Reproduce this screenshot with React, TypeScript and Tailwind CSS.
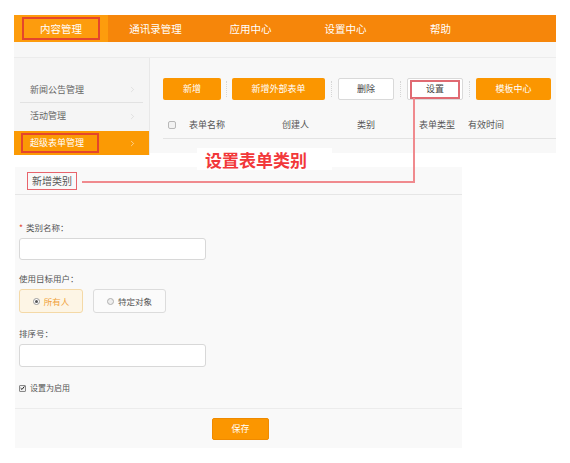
import { ChevronRight } from "lucide-react";

const navItems = ["内容管理", "通讯录管理", "应用中心", "设置中心", "帮助"];
const sideItems = ["新闻公告管理", "活动管理"];
const columns = [
  { label: "表单名称", w: "w-[93px]" },
  { label: "创建人", w: "w-[75px]" },
  { label: "类别", w: "w-[62px]" },
  { label: "表单类型", w: "w-[49px]" },
  { label: "有效时间", w: "w-[60px]" },
];

function Divider({ wide }: { wide?: boolean }) {
  return (
    <div
      className={`h-[16px] border-l border-dotted border-[#d6d6d6] ${wide ? "mx-[6px]" : "mx-[5px]"}`}
    />
  );
}

export default function App() {
  return (
    <div
      className="relative w-[570px] h-[463px] bg-white overflow-hidden"
      style={{ fontFamily: '"Noto Sans CJK SC", "Noto Sans", sans-serif' }}
    >
      {/* Top nav */}
      <div className="ml-[14px] mt-[15px] w-[542px] h-[27px] flex bg-[#f6860a] text-white text-[10.5px]">
        {navItems.map((item, i) =>
          i === 0 ? (
            <div key={item} className="w-[94px] h-full bg-[#fd9c0d] flex items-center justify-center">
              <div className="w-[78px] h-[23px] border-2 border-[#e4462c] flex items-center justify-center">
                {item}
              </div>
            </div>
          ) : (
            <div key={item} className="w-[95px] h-full flex items-center justify-center">
              {item}
            </div>
          )
        )}
      </div>

      {/* Grey band */}
      <div className="ml-[14px] w-[542px] h-[16px] bg-[#f7f7f7] border-b border-[#ececec]" />

      {/* Body */}
      <div className="ml-[14px] w-[542px] flex">
        {/* Sidebar */}
        <div className="w-[136px] h-[97px] bg-[#f5f5f5] border-r border-[#e8e8e8] pt-[19px] text-[9px] text-[#666]">
          {sideItems.map((item, i) => (
            <div
              key={item}
              className={`mx-[6px] h-[26px] flex items-center justify-between pl-[10px] pr-[6px] ${
                i === 0 ? "border-b border-[#e2e2e2]" : ""
              }`}
            >
              <span>{item}</span>
              <ChevronRight size={9} strokeWidth={1.2} className="text-[#c8c8c8]" />
            </div>
          ))}
          <div className="h-[24px] mt-[2px] bg-[#fb9a04] flex items-center justify-between pl-[7px] pr-[12px] text-white">
            <div className="w-[78px] h-[20px] border-2 border-[#e4462c] flex items-center pl-[7px]">
              超级表单管理
            </div>
            <ChevronRight size={9} strokeWidth={1.4} className="text-white" />
          </div>
        </div>

        {/* Main */}
        <div className="w-[406px] h-[95px] bg-[#f8f8f8] pl-[13px] pt-[20px]">
          <div className="flex items-center text-[9px]">
            <button className="w-[58px] h-[22px] rounded-[2px] bg-[#fb9600] text-white">新增</button>
            <Divider />
            <button className="w-[93px] h-[22px] rounded-[2px] bg-[#fb9600] text-white">新增外部表单</button>
            <Divider wide />
            <button className="w-[56px] h-[22px] rounded-[2px] bg-white border border-[#d9d9d9] text-[#444]">
              删除
            </button>
            <Divider wide />
            <div className="w-[56px] h-[22px] rounded-[2px] bg-white border border-[#d9d9d9] flex items-center justify-center">
              <div className="w-[50px] h-[19px] border-2 border-[#e06a72] flex items-center justify-center text-[#444]">
                设置
              </div>
            </div>
            <Divider wide />
            <button className="w-[75px] h-[22px] rounded-[2px] bg-[#fb9600] text-white">模板中心</button>
          </div>
          <div className="mt-[12px] h-[27px] border-b border-[#e3e3e3] flex items-center text-[9px] text-[#555]">
            <div className="w-[8px] h-[8px] ml-[5px] mr-[13px] rounded-[2px] border border-[#b8b8b8] bg-[#f2f2f2]" />
            {columns.map((c) => (
              <div key={c.label} className={c.w}>
                {c.label}
              </div>
            ))}
          </div>
        </div>
      </div>

      {/* Form panel */}
      <div className="ml-[15px] mt-[12px] w-[447px] h-[281px] bg-[#f9f9f9]">
        <div className="h-[28px] border-b border-[#e6e6e6] flex items-center pl-[12px]">
          <div className="h-[18px] px-[4px] border border-[#e8646c] flex items-center text-[10px] text-[#555]">
            新增类别
          </div>
        </div>

        <div className="pl-[4px] pt-[26px] text-[8.5px] text-[#555]">
          <div className="flex items-center h-[12px]">
            <span className="text-[#e4462c] mr-[3px]">*</span>
            <span>类别名称：</span>
          </div>
          <div className="mt-[5px] w-[187px] h-[22px] rounded-[3px] bg-white border border-[#d8d8d8]" />

          <div className="mt-[12px] h-[12px] flex items-center">使用目标用户：</div>
          <div className="mt-[5px] flex gap-[10px]">
            <div className="w-[64px] h-[24px] rounded-[3px] bg-[#fdf5e5] border border-[#f4d9a7] flex items-center justify-center gap-[4px] text-[#f0a138]">
              <span className="w-[7px] h-[7px] rounded-full border border-[#9a9a9a] bg-white flex items-center justify-center">
                <span className="w-[3px] h-[3px] rounded-full bg-[#555]" />
              </span>
              所有人
            </div>
            <div className="w-[73px] h-[24px] rounded-[3px] bg-[#fbfbfb] border border-[#dcdcdc] flex items-center justify-center gap-[4px] text-[#555]">
              <span className="w-[7px] h-[7px] rounded-full border border-[#b0b0b0] bg-[#eee]" />
              特定对象
            </div>
          </div>

          <div className="mt-[14px] h-[12px] flex items-center">排序号：</div>
          <div className="mt-[5px] w-[187px] h-[23px] rounded-[3px] bg-white border border-[#d8d8d8]" />

          <div className="mt-[15px] flex items-center gap-[4px] text-[8px]">
            <span className="w-[7px] h-[7px] rounded-[1px] border border-[#888] bg-[#f0f0f0] flex items-center justify-center">
              <svg viewBox="0 0 8 8" className="w-[6px] h-[6px]">
                <path d="M1 4.2 L3.2 6.3 L7 1.5" fill="none" stroke="#222" strokeWidth="1.6" />
              </svg>
            </span>
            设置为启用
          </div>
        </div>

        <div className="mt-[14px] border-t border-[#ececec] flex justify-center pt-[9px]">
          <button className="ml-[4px] w-[57px] h-[22px] rounded-[2px] bg-[#fb9600] border border-[#ef8a00] text-white text-[9px]">
            保存
          </button>
        </div>
      </div>

      {/* Annotation overlay */}
      <div className="absolute left-[197px] top-[148px] w-[135px] h-[22px] bg-white flex items-center pl-[8px]">
        <span className="text-[17px] font-bold text-[#f2383a] leading-none">设置表单类别</span>
      </div>
      <div className="absolute left-[413px] top-[98px] w-[2px] h-[85px] bg-[#f08a8e]" />
      <div className="absolute left-[82px] top-[181px] w-[333px] h-[2px] bg-[#f08a8e]" />
    </div>
  );
}
